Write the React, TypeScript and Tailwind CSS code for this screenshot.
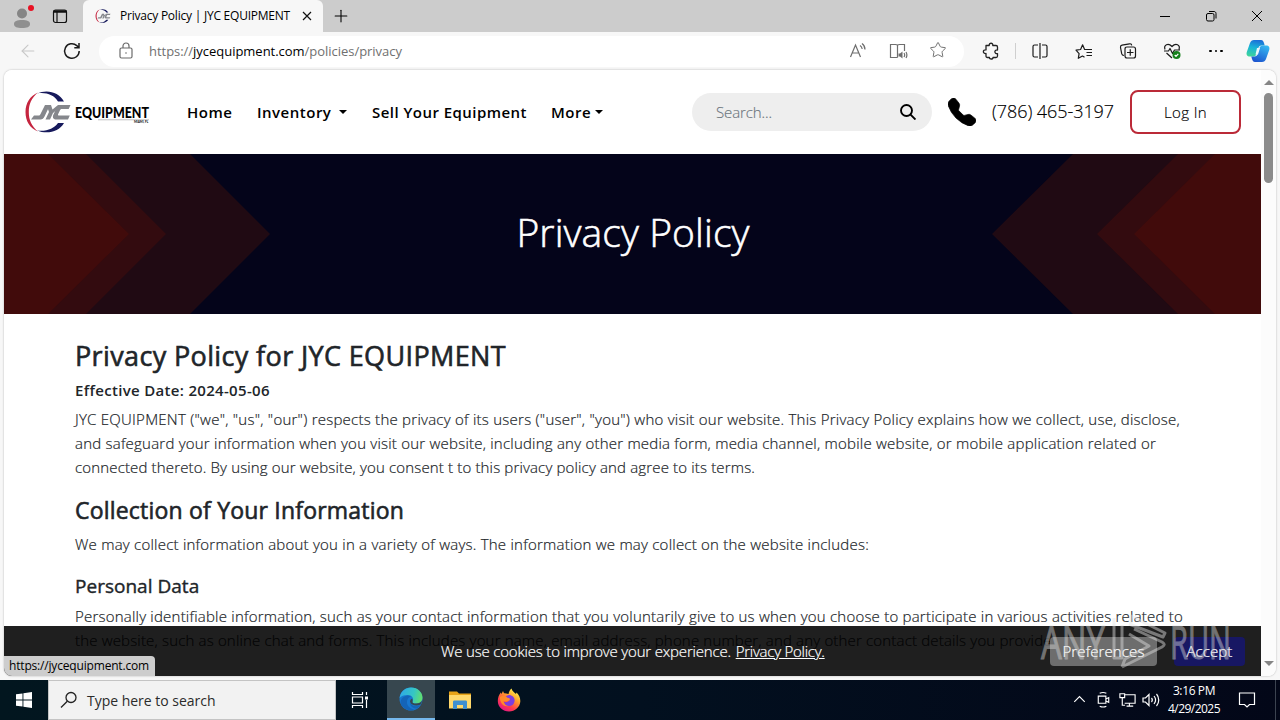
import React, { useState } from 'react';
import clsx from 'clsx';
import { ArrowLeft, Plus, Star } from 'lucide-react';
import { BsTelephoneFill } from 'react-icons/bs';

const JycMark = ({ className }: { className: string }) => (
  <svg viewBox="0 0 46 42" className={className} aria-hidden="true">
    <path d="M13 1.500C5 5 0.500 12 0.500 21s4 16 12.500 19.500C6.500 35 3.800 29 3.800 21S6.500 7 13 1.500z" fill="#c5253f" />
    <path d="M12 2.500C22-2 34 1 39 10.500h-6C29 4 21 1 12 2.500z" fill="#171a5c" />
    <path d="M12 39.500C22 43.500 34 41 39 32h-6C29 37.500 21 41 12 39.500z" fill="#171a5c" />
    <path d="M6 28.500l3-4h4.500c1 0 1.500-.5 2-1.500l4.500-9h5l-5.500 11.500c-1 2-2 3-4 3zM21.500 14H26l1.500 4.500L33 14h4.500l-9.500 8-3 6.500h-4.500l3.500-7.500z" fill="#85878c" />
    <path d="M45.500 14H36.500c-2.500 0-4 1-5 3l-3 6.500c-1.500 3 0 5 3 5H43l1.800-4H34c-1 0-1.300-.6-.8-1.500l1.800-3.700c.4-.9 1-1.300 2-1.300h6.700z" fill="#85878c" />
  </svg>
);

const EdgeLogo = () => (
  <svg viewBox="0 0 24 24" className="size-6" aria-hidden="true">
    <defs>
      <linearGradient id="edgeTop" x1="0" x2="1" y1="0.300" y2="0.500">
        <stop offset="0" stopColor="#2fa8e8" />
        <stop offset="0.600" stopColor="#35c6c4" />
        <stop offset="1" stopColor="#62df6e" />
      </linearGradient>
    </defs>
    <circle cx="12" cy="12" r="11.500" fill="#1877cf" />
    <path d="M.6 11C1.500 4.500 6.500.500 12 .500c7 0 11.500 5 11.500 10 0 4-3 6-6.500 6-2.500 0-4-.8-3.500-1.800 1.800-3-.3-6.700-5-6.700-3.500 0-6.700 1-7.900 3z" fill="url(#edgeTop)" />
    <path d="M9 11.500c-3 4.500.500 11 7 11-6 2.500-13-1-14.500-7C2 11 5 9 9 8.500c1.500 0 3 1 3 1s-2 .5-3 2z" fill="#1464b8" />
    <path d="M13.500 14.700c-.5 1 1 1.800 3.500 1.800 3 0 5-1 6-3-.2 1.700-.8 3-1.500 4-3.500 2-9.500 1-10.500-2.500 0-2 1-3 2-3.300.5.500.8 1.200.5 3z" fill="#37474f" />
    <path d="M11 15c0 4.500 3.500 7 7 6.500 1.500-1 2.500-2 3.200-3.200-4 2-9 .8-10.200-3.300z" fill="#1565b5" />
  </svg>
);

const FirefoxLogo = () => (
  <svg viewBox="0 0 24 24" className="size-6" aria-hidden="true">
    <defs>
      <linearGradient id="fox" x1="0.800" x2="0.200" y1="0.050" y2="0.950">
        <stop offset="0" stopColor="#fff44f" />
        <stop offset="0.350" stopColor="#ffa02b" />
        <stop offset="0.700" stopColor="#ff3b4c" />
        <stop offset="1" stopColor="#e31587" />
      </linearGradient>
    </defs>
    <path d="M14.500.500c.8 3 3 4 4.500 5.500l.5-1.500c2.500 2 4 5.500 3.800 9C23 19 18 23.500 12 23.500S.8 19 .8 13c0-3 1-6 3-8.500L4.500 6 6 3l1 2.200C9.500 5 11.500 6 11.500 6c.5-2.500 1.500-4.500 3-5.500z" fill="url(#fox)" />
    <path d="M8 10c1-2.500 4-3.500 6-2.500 3 1 4 3.500 3.500 6-.5 3-3 4.500-5.500 4.500-3 0-5-2-5-4.500 1 1 2.500 1 4 0l2-1.500C12 10.500 10 10.500 8 10z" fill="#7c3ee0" />
    <path d="M3 9c2-1.500 4-1.500 5.500-.8L11 10c1.500 0 2 .5 2 1.500-1 0-2 2.500-5 2-1 0-1.500-.5-1.500-.5C7 16 9 18 12 18c-6 1.500-9.500-4-9-9z" fill="#ff8a2a" />
  </svg>
);

const CopilotLogo = () => (
  <svg viewBox="0 0 24 22" className="h-[22px] w-6" aria-hidden="true">
    <defs>
      <linearGradient id="copA" x1="0.500" x2="0.300" y1="0" y2="1">
        <stop offset="0" stopColor="#1b6fd8" />
        <stop offset="0.450" stopColor="#18b3d8" />
        <stop offset="1" stopColor="#3fd59a" />
      </linearGradient>
      <linearGradient id="copB" x1="0.800" x2="0.300" y1="0" y2="1">
        <stop offset="0" stopColor="#35b9f2" />
        <stop offset="1" stopColor="#1c55cf" />
      </linearGradient>
    </defs>
    <path d="M8 0h7c2 0 2.500 1.500 3 3l.7 2.500h-3c-2 0-3 1-3.500 3L10.500 14c-.5 1.500-1.500 2.500-3 2.500H4C1 16.500 0 14.500.8 12L4 3C4.800 1 6 0 8 0z" fill="url(#copA)" />
    <path d="M16 22H9c-2 0-2.500-1.500-3-3l-.7-2.500h3c2 0 3-1 3.500-3L13.500 8c.5-1.500 1.500-2.500 3-2.500H20c3 0 4 2 3.200 4.500L20 19c-.8 2-2 3-4 3z" fill="url(#copB)" />
    <path d="M11 8h3l-2 6.500H9.500z" fill="#e9f7fd" />
  </svg>
);

const TitleBar = () => (
  <div className="flex h-8 items-center bg-[#cccccc] text-black">
    <div className="flex w-11 justify-center">
      <svg viewBox="0 0 24 24" className="size-6" aria-hidden="true">
        <circle cx="12" cy="9.500" r="5" fill="#858585" />
        <path d="M4 20c0-3 3-4 8-4s8 1 8 4-3 4-8 4-8-1-8-4z" fill="#8f8f8f" />
        <circle cx="21" cy="4" r="3" fill="#e81123" />
      </svg>
    </div>
    <div className="flex w-8 justify-center">
      <svg viewBox="0 0 16 16" className="size-4" fill="none" stroke="#111" strokeWidth="1.200" aria-hidden="true">
        <rect x="1.500" y="2" width="13" height="12.500" rx="2" />
        <path d="M1.500 3.500h13" strokeWidth="2.500" />
        <path d="M5 4v10" />
      </svg>
    </div>
    <div className="ml-[7px] flex h-8 w-60 items-center rounded-t-md bg-[#f7f7f7] pl-3">
      <JycMark className="h-[14px] w-4" />
      <span className="ml-[9px] w-[172px] whitespace-nowrap text-xs tracking-[-0.227px]">Privacy Policy | JYC EQUIPMENT</span>
      <svg viewBox="0 0 12 12" className="ml-[9px] size-3" stroke="#111" strokeWidth="1.200" aria-hidden="true"><path d="M2 2l8 8M10 2l-8 8" /></svg>
    </div>
    <Plus className="ml-2 size-5" strokeWidth={1.300} />
    <div className="ml-auto flex">
      <div className="flex h-8 w-[46px] items-center justify-center"><div className="h-px w-2.5 bg-black" /></div>
      <div className="flex h-8 w-[46px] items-center justify-center">
        <svg viewBox="0 0 12 12" className="size-3" fill="none" stroke="#000" aria-hidden="true">
          <rect x="1.500" y="3.500" width="7.500" height="7.500" rx="1.500" />
          <path d="M4 1.500h5c1.200 0 2 .8 2 2V8.500" />
        </svg>
      </div>
      <div className="flex h-8 w-[46px] items-center justify-center">
        <svg viewBox="0 0 12 12" className="size-3" stroke="#000" aria-hidden="true"><path d="M1 1l10 10M11 1L1 11" /></svg>
      </div>
    </div>
  </div>
);

const toolIcons: React.ReactNode[] = [
  <path key="split" d="M8 4H4.500C3.500 4 3 4.500 3 5.500v9c0 1 .5 1.500 1.500 1.500H8M12 4h3.500c1 0 1.500.5 1.500 1.500v9c0 1-.5 1.500-1.500 1.500H12M10 2v16" />,
  <path key="fav" d="M10.500 16.200L8.500 15l-4.200 2.300.8-4.700L2 9.200l4.600-.7 2-4.700 2 4.700H18M12.500 11.500H18M12.500 14.500H18" />,
  <path key="col" d="M6 14.500c-1.500 0-2-.5-2.300-1.800L2.500 6.500c-.2-1.200.3-2 1.500-2.300L11.500 2.800c1.200-.2 2 .4 2.200 1.600M9 6h6.500c1.300 0 2 .7 2 2V15c0 1.300-.7 2-2 2H9c-1.300 0-2-.7-2-2V8c0-1.300.7-2 2-2zM12.250 8.300v6.400M9 11.500h6.500" />,
  <React.Fragment key="heart">
    <path d="M3 8.500C1.500 4 6 1.500 10 5.500c4-4 8.500-1.500 7 3M2 10h4.500L8 7.500l2.500 5L12.500 9H18M4.500 12l5.500 5" />
    <circle cx="14.500" cy="14" r="4" fill="#16801c" stroke="none" />
    <path d="M12.700 14l1.300 1.300 2.300-2.500" stroke="#fff" />
  </React.Fragment>,
];

const AddressBar = () => (
  <div className="flex h-[38px] items-center bg-[#f7f7f7]">
    <ArrowLeft className="ml-[18px] size-5 text-[#c8c8c8]" strokeWidth={1.300} />
    <svg viewBox="0 0 20 20" className="ml-6 size-5" fill="none" stroke="#1b1b1b" strokeWidth="1.500" aria-hidden="true">
      <path d="M17.200 10A7.300 7.300 0 1 1 14.800 4.600L16.800 6.500M17 2v4.700h-4.700" />
    </svg>
    <div className="ml-[17px] flex h-[31px] w-[865px] items-center rounded-full bg-white pl-[18px] pr-1.5">
      <svg viewBox="0 0 18 18" className="size-[18px]" fill="none" stroke="#6b6b6b" strokeWidth="1.200" aria-hidden="true">
        <rect x="3" y="6" width="12" height="10" rx="1.500" />
        <path d="M6 6V4a3 3 0 0 1 6 0v2" />
        <circle cx="9" cy="11" r=".8" fill="#6b6b6b" stroke="none" />
      </svg>
      <span className="ml-3.5 whitespace-nowrap pt-0.5 text-[13px] tracking-[-0.030px] text-[#707070]">
        https://<span className="text-black">jycequipment.com</span>/policies/privacy
      </span>
      <div className="ml-auto flex text-[#6e6e6e]">
        <div className="flex w-10 justify-center">
          <svg viewBox="0 0 20 20" className="size-5" fill="none" stroke="currentColor" strokeWidth="1.200" aria-hidden="true">
            <path d="M2.500 16L7.500 4l5 12M4.200 12h6.600M12 4.500c1.500 1 2 2 2.200 3.500M14 2.500c2 1.500 3 3.500 3 6" />
          </svg>
        </div>
        <div className="flex w-10 justify-center">
          <svg viewBox="0 0 20 20" className="size-5" fill="none" stroke="currentColor" strokeWidth="1.200" aria-hidden="true">
            <path d="M9.500 4v12.500M9.500 16.500H2.500v-13h5c1.200 0 2 .5 2 .5s.8-.5 2-.5h5V10" />
            <path d="M10.500 12.500h1.500l2.500-2v7L12 15.500h-1.500z" fill="currentColor" stroke="none" />
            <path d="M16 12c.7 1 .7 3 0 4M18 11c1.200 2 1.200 4 0 6" />
          </svg>
        </div>
        <div className="flex w-10 justify-center"><Star className="size-[18px]" strokeWidth={1.300} /></div>
      </div>
    </div>
    <div className="ml-[5px] flex w-11 justify-center">
      <svg viewBox="0 0 20 20" className="size-5" fill="none" stroke="#222" strokeWidth="1.300" strokeLinejoin="round" aria-hidden="true">
        <path d="M5 4.500h3.200c-.3-3 4-3 3.600 0H15c1 0 1.500.5 1.500 1.500V9c-3.500-.5-3.500 4 0 3.600V15c0 1-.5 1.500-1.500 1.500h-3c.3 2-3.800 2-3.600 0H6.500C5.500 16.500 5 16 5 15v-2.500c-3.500.4-3.500-4 0-3.600z" />
      </svg>
    </div>
    <div className="ml-0.5 h-4 w-px bg-[#cfcfcf]" />
    <div className="ml-0.5 flex">
      {toolIcons.map((icon, i) => (
        <div key={i} className="flex w-11 justify-center">
          <svg viewBox="0 0 20 20" className="size-5" fill="none" stroke="#1b1b1b" strokeWidth="1.200" strokeLinejoin="round" aria-hidden="true">{icon}</svg>
        </div>
      ))}
      <div className="flex w-11 items-center justify-center gap-[3px]">
        <span className="size-[2.500px] rounded-full bg-black" />
        <span className="size-[2.500px] rounded-full bg-black" />
        <span className="size-[2.500px] rounded-full bg-black" />
      </div>
    </div>
    <div className="ml-2"><CopilotLogo /></div>
  </div>
);

const Caret = () => <span className="mb-px inline-block border-x-4 border-t-4 border-x-transparent border-t-black" />;

const SiteNav = () => {
  const [query, setQuery] = useState('');

  return (
    <header className="flex h-[84px] shrink-0 items-center bg-white pl-[21px] text-black">
      {/* Logo */}
      <a className="flex items-center">
        <JycMark className="h-[42px] w-[46px]" />
        <svg viewBox="0 0 76 24" className="ml-1 h-6 w-[76px]" aria-hidden="true">
          <text x="0" y="17.500" fontFamily="Lato" fontWeight="900" fontSize="14.500" textLength="74" lengthAdjust="spacingAndGlyphs">EQUIPMENT</text>
          <path d="M23 19.800h51" stroke="#999" strokeWidth=".6" />
          <text x="59" y="23.300" fontFamily="Lato" fontWeight="700" fontSize="3">MIAMI, FL</text>
        </svg>
      </a>
      {/* Main links */}
      <nav className="ml-9 flex items-center whitespace-nowrap pt-px text-[15px] font-semibold tracking-[0.500px]">
        <a className="w-[70px]">Home</a>
        <a className="flex w-[115px] items-center gap-2">Inventory <Caret /></a>
        <a className="w-[179px] tracking-[0.460px]">Sell Your Equipment</a>
        <a className="flex items-center gap-1">More<Caret /></a>
      </nav>
      {/* Search, phone & login */}
      <div className="ml-auto flex items-center text-[15px] font-light [-webkit-text-stroke:0.150px]">
        <div className="flex h-[38px] w-60 items-center rounded-full bg-[#eeeeee] pl-6 pr-4">
          <input
            className="w-full min-w-0 bg-transparent tracking-[-0.100px] outline-none placeholder:text-[#6c757d]"
            placeholder="Search..."
            value={query}
            onChange={(e) => setQuery(e.target.value)}
          />
          <svg viewBox="0 0 16 16" className="size-4 shrink-0" fill="none" stroke="#000" strokeWidth="1.900" aria-hidden="true">
            <circle cx="6.500" cy="6.500" r="5.500" />
            <path d="M10.300 10.300L15.500 15.500" />
          </svg>
        </div>
        <BsTelephoneFill className="ml-4 size-7 stroke-[0.400] stroke-black" />
        <span className="ml-4 w-[122px] whitespace-nowrap pb-0.5 text-lg tracking-[-0.072px]">(786) 465-3197</span>
        <button className="ml-4 mr-5 h-[44px] w-[111px] rounded-lg border-2 border-[#bb2a38] pt-px tracking-[0.370px]">Log In</button>
      </div>
    </header>
  );
};

const Hero = () => (
  <section className="relative flex h-40 shrink-0 items-center justify-center bg-[#04041a]">
    <svg viewBox="0 0 1257 160" className="absolute inset-0 h-full w-full" aria-hidden="true">
      <path d="M0 0H186L266 80L186 160H0zM1257 0H1069L988 80L1069 160H1257z" fill="#200a13" />
      <path d="M0 0H82L162 80L82 160H0zM1257 0H1174L1093 80L1174 160H1257z" fill="#330b0f" />
      <path d="M0 0H44L125 80L44 160H0zM1257 0H1211L1130 80L1211 160H1257z" fill="#410b0b" />
    </svg>
    <h1 className="relative pb-1.5 pl-px text-[39px] font-light leading-none tracking-[0.100px] text-white [-webkit-text-stroke:0.600px]">Privacy Policy</h1>
  </section>
);

const PolicyText = () => (
  <main className="whitespace-nowrap pl-[71px] pt-[25px] text-[15px] font-light leading-6 text-[#212529] [-webkit-text-stroke:0.200px]">
    <h2 className="mb-[7px] text-[27px] font-medium leading-[34px] tracking-[0.364px] [-webkit-text-stroke:0.600px]">Privacy Policy for JYC EQUIPMENT</h2>
    <h6 className="mb-[7px] font-semibold leading-5 tracking-[0.320px] [-webkit-text-stroke:0px]">Effective Date: 2024-05-06</h6>
    <p className="tracking-[0.248px]">JYC EQUIPMENT ("we", "us", "our") respects the privacy of its users ("user", "you") who visit our website. This Privacy Policy explains how we collect, use, disclose,</p>
    <p className="tracking-[0.221px]">and safeguard your information when you visit our website, including any other media form, media channel, mobile website, or mobile application related or</p>
    <p className="mb-[17px] tracking-[0.154px]">connected thereto. By using our website, you consent t to this privacy policy and agree to its terms.</p>
    <h3 className="mb-[7px] text-[23px] font-medium leading-[29px] tracking-[0.200px] [-webkit-text-stroke:0.600px]">Collection of Your Information</h3>
    <p className="mb-[18px] tracking-[0.227px]">We may collect information about you in a variety of ways. The information we may collect on the website includes:</p>
    <h4 className="mb-[6px] text-[19px] font-medium leading-6 tracking-[0.020px] [-webkit-text-stroke:0.400px]">Personal Data</h4>
    <p className="tracking-[0.215px]">Personally identifiable information, such as your contact information that you voluntarily give to us when you choose to participate in various activities related to</p>
    <p className="mb-5 tracking-[0.170px]">the website, such as online chat and forms. This includes your name, email address, phone number, and any other contact details you provide.</p>
    <h3 className="text-[23px] font-medium leading-[29px] tracking-[0.200px] [-webkit-text-stroke:0.600px]">Use of Your Information</h3>
  </main>
);

const CookieBar = () => (
  <div className="absolute bottom-0 left-0 flex h-[50px] w-[1257px] items-center bg-black/88 text-[15px] font-light text-white [-webkit-text-stroke:0.200px]">
    <p className="ml-[437px] whitespace-nowrap pt-px">
      <span className="tracking-[-0.176px]">We use cookies to improve your experience. </span>
      <a className="ml-px tracking-[-0.247px] underline">Privacy Policy.</a>
    </p>
    <button className="ml-auto h-[29px] w-[107px] rounded bg-[#6d6d6d] tracking-[0.100px]">Preferences</button>
    <button className="ml-[17px] mr-4 h-[29px] w-[71px] rounded bg-[#171763] tracking-[0.080px]">Accept</button>
  </div>
);

const Watermark = () => (
  <svg viewBox="0 0 196 64" className="absolute bottom-1 right-[42px] h-16 w-[196px] opacity-45" aria-hidden="true">
    <g fill="#d8d8d8" stroke="#d8d8d8" strokeWidth="1" fontFamily="Open Sans" fontWeight="400" fontSize="46">
      <text x="3" y="51" textLength="64" lengthAdjust="spacingAndGlyphs">ANY</text>
      <text x="132" y="51" textLength="61" lengthAdjust="spacingAndGlyphs">RUN</text>
    </g>
    <path d="M76 10v40h8V17M93 17V8l34 17-2 4-34-13M84 59l40-20c3-2 3-3 0-5l-28-13M84 59l3-8 24-13-20-12" fill="none" stroke="#e4e4e4" strokeWidth="3" strokeLinejoin="round" />
  </svg>
);

const Scrollbar = () => (
  <div className="flex w-[15px] flex-col items-center bg-[#fcfcfc] pb-2.5 pt-2.5">
    <span className="border-x-[5px] border-b-[5px] border-x-transparent border-b-[#858585]" />
    <span className="mt-2 h-[90px] w-[9px] rounded-full bg-[#8b8b8b]" />
    <span className="mt-auto border-x-[5px] border-t-[5px] border-x-transparent border-t-[#858585]" />
  </div>
);

const trayIcons = [
  'M4.500 12.500l5.500-5.500 5.500 5.500',
  'M4.500 6.500h8v7.500h-8zM12.500 9.500l3-1.500v5l-3-1.500M6 3.500c2-1 5-1 7 0M6 17c2 1 5 1 7 0',
  'M2 4h5v4H2zM7 5h11v9H7M4.500 8v8h3M12 14v2.500M9 17h7',
  'M2 8h2.500L8 4.500v11L4.500 12H2zM10.500 8c1 1.200 1 2.800 0 4M13 6c2 2.500 2 5.500 0 8M15.500 4c3 3.500 3 8.500 0 12',
];

const Taskbar = () => (
  <div className="flex h-10 items-center bg-linear-to-r from-[#02161f] via-[#02101f] to-[#030718] text-white">
    <div className="flex w-12 justify-center">
      <svg viewBox="0 0 16 16" className="size-4" fill="#fff" aria-hidden="true">
        <path d="M0 2.300L6.500 1.400V7.500H0zM7.400 1.200L16 0v7.500H7.400zM0 8.400h6.500v6.200L0 13.700zM7.400 8.400H16V16l-8.600-1.200z" />
      </svg>
    </div>
    <div className="flex h-10 w-72 items-center border border-[#c4c4c4] bg-[#f2f2f2] pl-[11px] text-[#2b2b2b]">
      <svg viewBox="0 0 18 18" className="size-[18px]" fill="none" stroke="#222" strokeWidth="1.300" aria-hidden="true">
        <circle cx="11" cy="6.500" r="5" />
        <path d="M7.300 10.200L1 16.500" />
      </svg>
      <span className="ml-[9px] pt-0.5 text-sm tracking-[-0.020px]">Type here to search</span>
    </div>
    <div className="flex w-12 justify-center">
      <svg viewBox="0 0 18 18" className="size-[18px]" fill="none" stroke="#fff" strokeWidth="1.200" aria-hidden="true">
        <path d="M1.500 1v2.500h10V1M1.500 6h10v6h-10zM1.500 17v-2.500h10V17M15.500 1v3M15.500 9v8" />
        <path d="M14 5.500h3v3h-3z" fill="#fff" stroke="none" />
      </svg>
    </div>
    <div className="ml-[3px] flex h-10 w-12 items-center justify-center border-b-2 border-[#76b9ed] bg-[#37474f]"><EdgeLogo /></div>
    <div className="flex w-[49px] justify-center">
      <svg viewBox="0 0 22 20" className="h-5 w-[22px]" aria-hidden="true">
        <path d="M0 1.500h8l2 2h12V18H0z" fill="#e8a317" />
        <path d="M0 5h22v13.500H0z" fill="#ffd86b" />
        <path d="M4 19v-7c0-1 .5-1.500 1.500-1.500h11c1 0 1.500.5 1.500 1.500v7h-4v-4H8v4z" fill="#3f8fcf" />
      </svg>
    </div>
    <div className="flex w-[49px] justify-center"><FirefoxLogo /></div>
    <div className="ml-auto flex">
      {trayIcons.map((d, i) => (
        <div key={i} className="flex w-6 justify-center">
          <svg viewBox="0 0 20 20" className={clsx('shrink-0', i === 3 ? 'size-5' : 'size-[19px]')} fill="none" stroke="#fff" strokeWidth="1.200" aria-hidden="true"><path d={d} /></svg>
        </div>
      ))}
    </div>
    <div className="w-16 pr-0.5 text-center text-xs leading-[18px]">
      <div className="tracking-[-0.380px]">3:16 PM</div>
      <div className="tracking-[-0.537px]">4/29/2025</div>
    </div>
    <svg viewBox="0 0 18 18" className="ml-[11px] mr-[19px] size-[18px]" fill="none" stroke="#fff" strokeWidth="1.200" aria-hidden="true">
      <path d="M1.500 2h15v11.500h-5L9 16l-2.500-2.500h-5z" />
    </svg>
    <div className="mr-1 h-10 w-px bg-[#3c4350]" />
  </div>
);

const App = () => {
  return (
    <div className="flex h-[720px] w-[1280px] flex-col overflow-hidden bg-[#f7f7f7] font-['Open_Sans',sans-serif] text-base">
      <TitleBar />
      <AddressBar />
      <div className="flex h-[610px] px-1 pb-1">
        <div className="relative flex h-[606px] w-[1272px] overflow-hidden rounded-lg bg-white shadow-[0_0_2px_rgba(0,0,0,0.300)]">
          <div className="flex w-[1257px] flex-col overflow-hidden">
            <SiteNav />
            <Hero />
            <PolicyText />
          </div>
          <Scrollbar />
          <CookieBar />
          {/* Link target shown by the browser */}
          <div className="absolute bottom-0 left-0 flex h-5 w-[151px] items-center rounded-tr bg-[#cdcdcd] pl-[5px] text-xs tracking-[-0.177px] text-black">https://jycequipment.com</div>
          <Watermark />
        </div>
      </div>
      <Taskbar />
    </div>
  );
};

export default App;
